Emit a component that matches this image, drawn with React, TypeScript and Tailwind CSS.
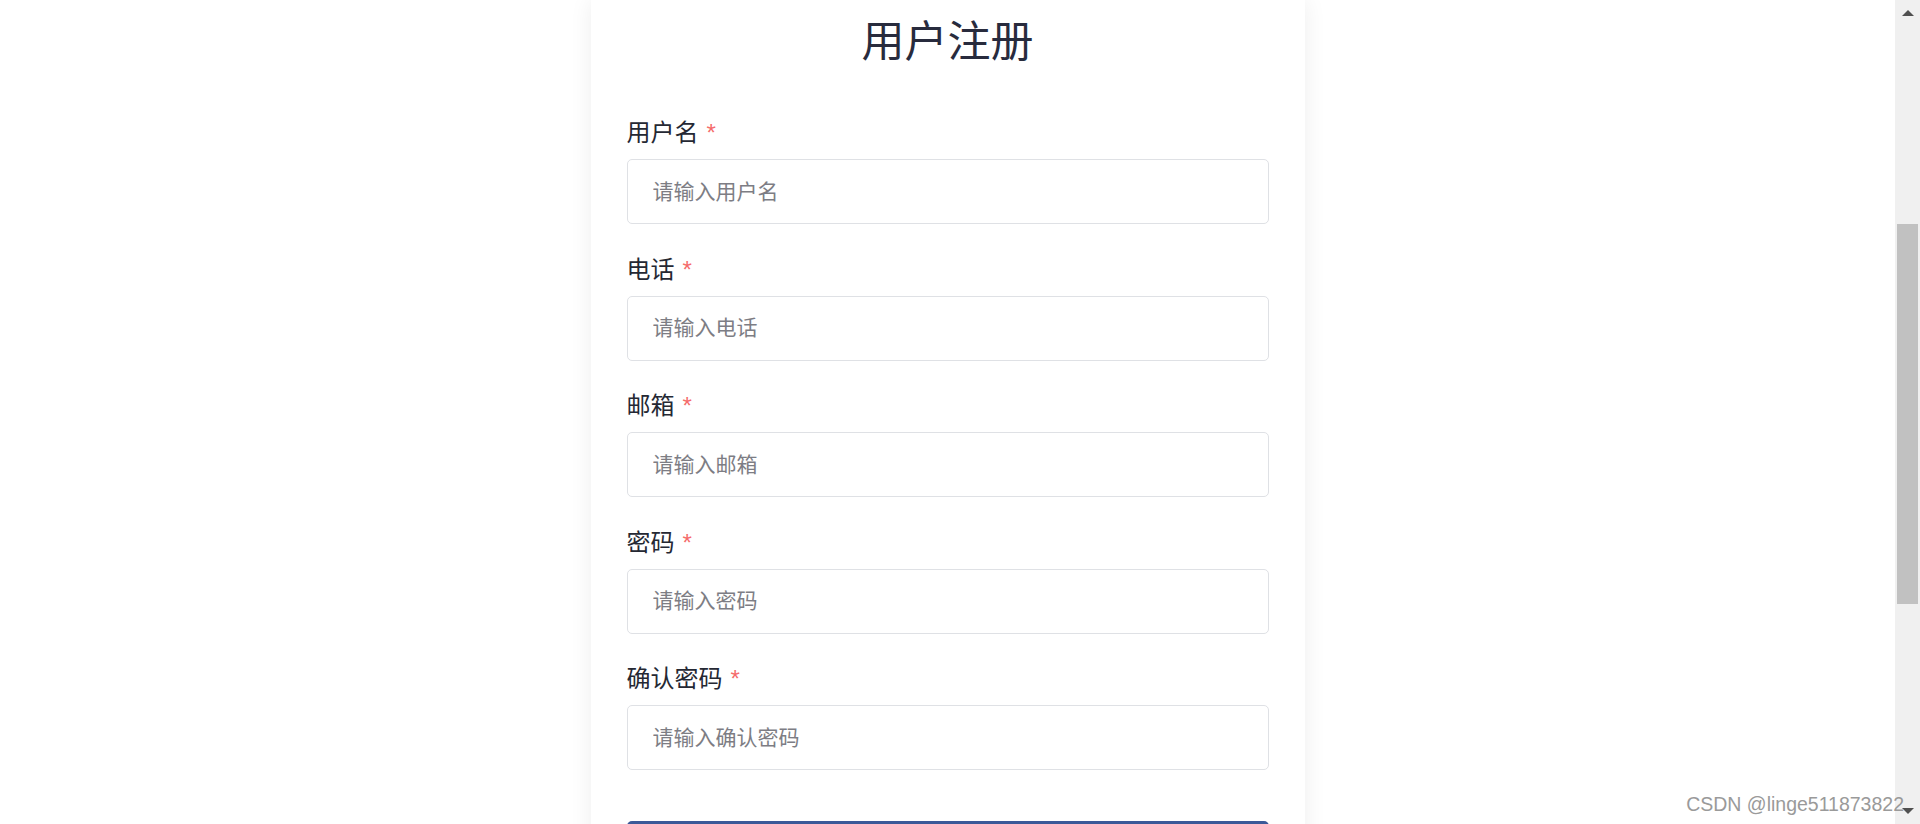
import React from "react";

interface IField {
  label: string;
  placeholder: string;
}

const fields: IField[] = [
  { label: "用户名", placeholder: "请输入用户名" },
  { label: "电话", placeholder: "请输入电话" },
  { label: "邮箱", placeholder: "请输入邮箱" },
  { label: "密码", placeholder: "请输入密码" },
  { label: "确认密码", placeholder: "请输入确认密码" },
];

const font = "font-['Liberation_Sans','Noto_Sans_CJK_SC',sans-serif]";

const FormField = ({ label, placeholder }: IField) => (
  <div className="flex flex-col mb-[27.5px]">
    <label className="flex items-center h-[36px] text-[24px] leading-[36px] text-[#252833] mb-2">
      {label}
      <span className="text-[#f56c6c] ml-[8px] text-[24px] leading-[36px]">*</span>
    </label>
    <input
      type="text"
      placeholder={placeholder}
      className="h-[65px] w-full rounded-[5px] border border-[#dfe1e5] bg-white px-[25px] text-[21px] text-[#333] placeholder:text-[#7d7d84] outline-none"
    />
  </div>
);

const ScrollBar = () => (
  <div className="w-[25px] h-full bg-[#f0f0f0] flex flex-col items-center">
    <div className="h-[20px] flex items-center justify-center pt-[6px]">
      <div className="w-0 h-0 border-l-[6px] border-r-[6px] border-b-[6px] border-l-transparent border-r-transparent border-b-[#505050]" />
    </div>
    <div className="h-[204px]" />
    <div className="w-[21px] h-[380px] bg-[#c1c1c1]" />
    <div className="flex-1" />
    <div className="h-[20px] flex items-center justify-center pb-[6px]">
      <div className="w-0 h-0 border-l-[6px] border-r-[6px] border-t-[6px] border-l-transparent border-r-transparent border-t-[#505050]" />
    </div>
  </div>
);

const App = () => {
  return (
    <div className={`relative flex h-[824px] w-full overflow-hidden bg-white ${font}`}>
      <div className="flex-1 flex justify-center overflow-hidden">
        <div className="w-[714px] h-[900px] bg-white shadow-[0_0_22px_rgba(0,0,0,0.07)] px-[36px] pt-[16px]">
          <h1 className="text-center text-[43px] leading-[52px] h-[52px] text-[#282b3d] mb-[47px]">用户注册</h1>
          <form className="flex flex-col">
            {fields.map((field) => (
              <FormField key={field.label} {...field} />
            ))}
            <button
              type="button"
              className="mt-[23.5px] h-[60px] w-full rounded-[5px] bg-[#3b5998] text-white text-[22px]"
            >
              注册
            </button>
          </form>
        </div>
      </div>
      <ScrollBar />
      <div className="absolute right-[16px] bottom-[9px] text-[19.5px] leading-[22px] text-[#9a9a9a] font-['Liberation_Sans',sans-serif]">
        CSDN @linge511873822
      </div>
    </div>
  );
};

export default App;
